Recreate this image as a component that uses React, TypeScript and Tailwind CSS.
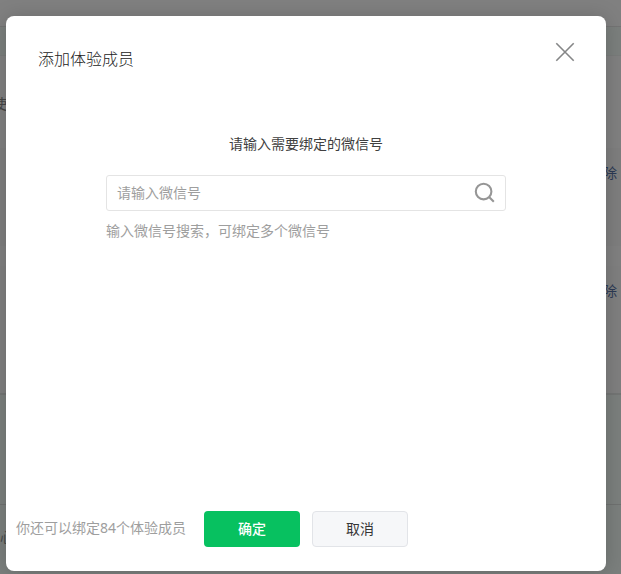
function Backdrop() {
  return (
    <div className="flex h-full flex-col overflow-hidden bg-[#808080] text-[14px] leading-[20px]">
      <div className="h-[27px] shrink-0 border-b border-[#747474]" />
      <div className="h-[29px] shrink-0 border-b border-[#797b7a] bg-[#7b7f7d]" />
      <div className="h-[92px] shrink-0 pt-[37px]">
        <span className="-ml-[7px] block text-[#454545]">使</span>
      </div>
      <div className="flex h-[98px] shrink-0 justify-end bg-[#7e7e7e] pt-[14px] pr-[4px] text-[#2b3954]">
        <span>除</span>
      </div>
      <div className="h-[20px] shrink-0" />
      <div className="flex h-[129px] shrink-0 justify-end border-b-2 border-[#737574] bg-[#7f7f7f] pt-[14px] pr-[4px] text-[#2b3954]">
        <span>除</span>
      </div>
      <div className="h-[110px] shrink-0 border-b border-[#6f7170] bg-[#7b7f7d]" />
      <div className="flex-1 bg-[#7b7f7d] pt-[21px]">
        <span className="block text-[#484a49]">心</span>
      </div>
    </div>
  );
}

function CloseIcon() {
  return (
    <svg width="20" height="20" viewBox="0 0 20 20" fill="none" stroke="#858687" strokeWidth="1.6">
      <path d="M1.3 1.3 18.7 18.7M18.7 1.3 1.3 18.7" />
    </svg>
  );
}

function SearchIcon() {
  return (
    <svg width="22" height="22" viewBox="0 0 22 22" fill="none" stroke="#969696" strokeWidth="2.1">
      <circle cx="9.6" cy="9.6" r="7.8" />
      <path d="m15.1 15.1 4.7 4.7" />
    </svg>
  );
}

export default function App() {
  return (
    <div className="relative h-[574px] w-[621px] overflow-hidden font-['Noto_Sans_CJK_SC',sans-serif]">
      <Backdrop />
      <div
        role="dialog"
        className="absolute top-[16px] left-[6px] flex h-[555px] w-[600px] flex-col rounded-[8px] bg-white shadow-[0_1px_20px_rgba(0,0,0,0.18)]"
      >
        <header className="flex justify-between pt-[26px] pr-[31px] pl-[32px]">
          <h3 className="pt-[4px] text-[16px] leading-[24px] font-light text-[#222]">添加体验成员</h3>
          <button aria-label="关闭" className="h-[20px] w-[20px]">
            <CloseIcon />
          </button>
        </header>
        <main className="flex flex-1 flex-col px-[100px] pt-[62px] text-[14px] leading-[22px]">
          <p className="text-center text-[#404040]">请输入需要绑定的微信号</p>
          <div className="mt-[21px] flex h-[36px] items-center justify-between rounded-[3px] border border-[#e4e4e4] pr-[9px] pl-[10px]">
            <span className="pb-[2px] text-[#9e9e9e]">请输入微信号</span>
            <SearchIcon />
          </div>
          <p className="mt-[8px] text-[#9e9e9e]">输入微信号搜索，可绑定多个微信号</p>
        </main>
        <footer className="mb-[24px] flex h-[36px] items-center pl-[10px] text-[14px] leading-[22px]">
          <span className="w-[188px] pb-[4px] whitespace-nowrap text-[#9e9e9e]">
            你还可以绑定<span className="font-['Noto_Sans']">84</span>个体验成员
          </span>
          <button className="h-[36px] w-[96px] rounded-[4px] bg-[#07c160] pb-[2px] font-medium text-white">确定</button>
          <button className="ml-[12px] h-[36px] w-[96px] rounded-[4px] border border-[#e2e4e8] bg-[#f6f7f9] pb-[2px] text-[#353535]">
            取消
          </button>
        </footer>
      </div>
    </div>
  );
}
